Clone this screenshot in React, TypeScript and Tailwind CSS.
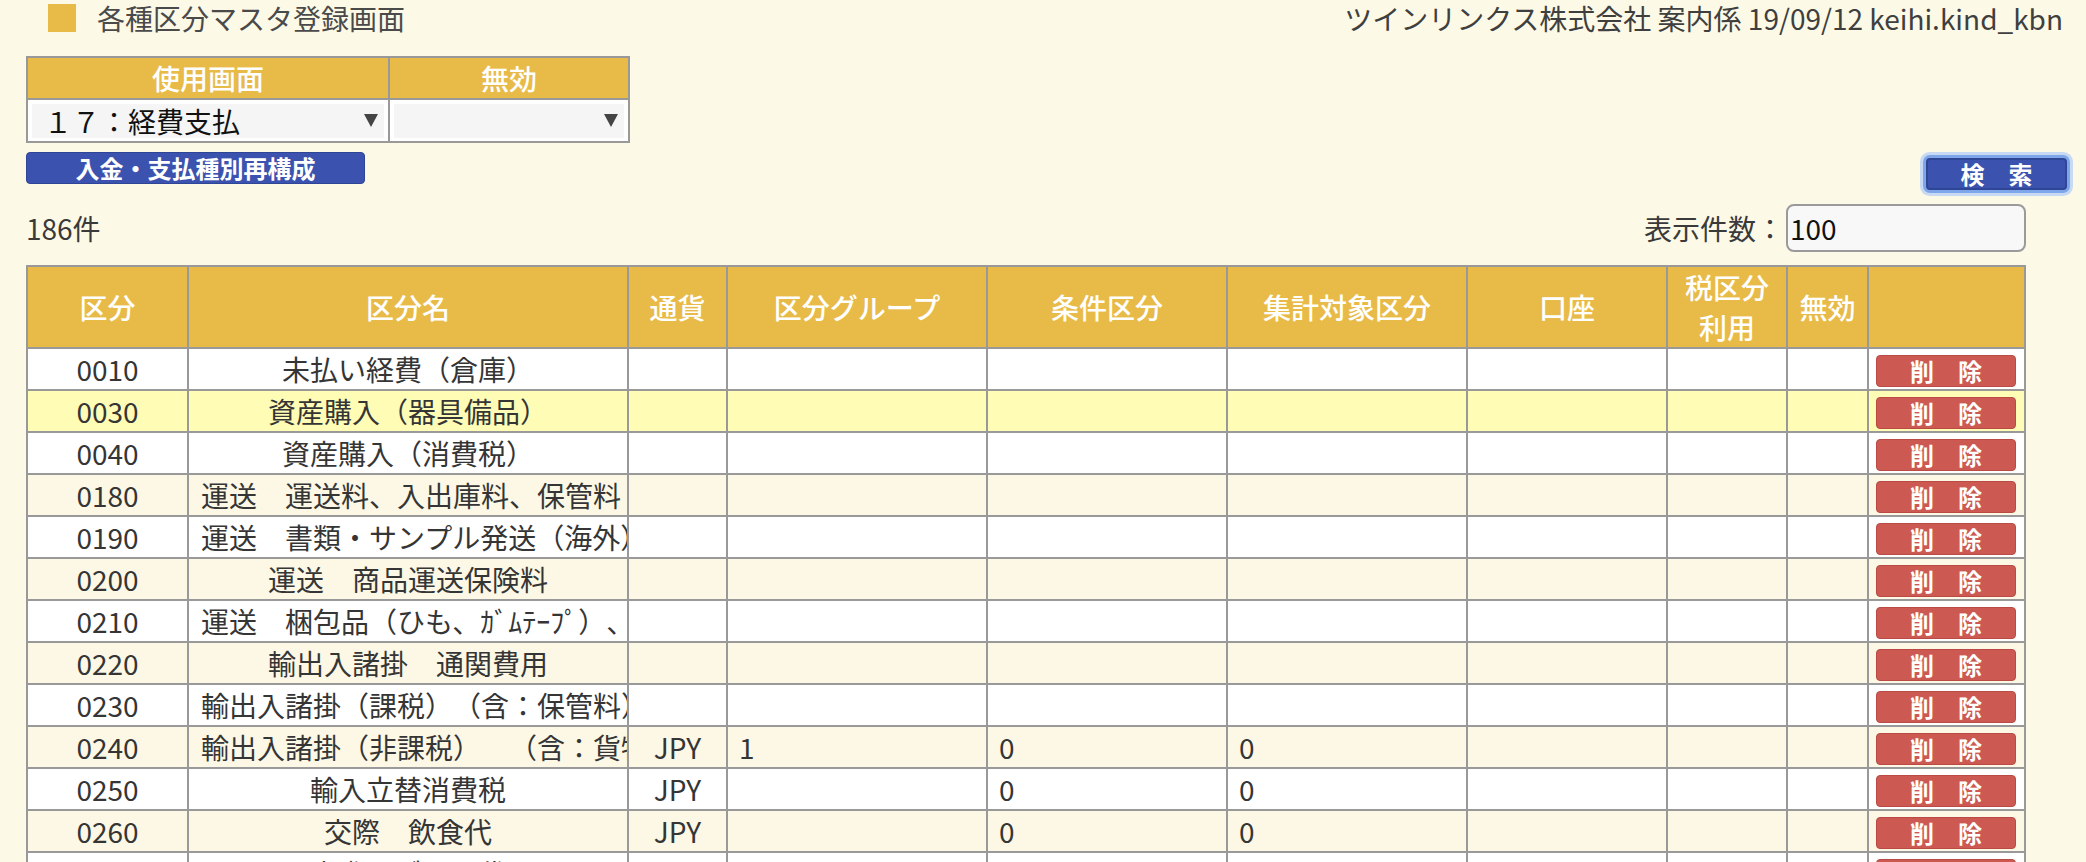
import React from 'react';

type Row = {
  code: string;
  name: string;
  cur?: string;
  group?: string;
  cond?: string;
  agg?: string;
  hl?: boolean;
};

const rows: Row[] = [
  { code: '0010', name: '未払い経費（倉庫）' },
  { code: '0030', name: '資産購入（器具備品）', hl: true },
  { code: '0040', name: '資産購入（消費税）' },
  { code: '0180', name: '運送　運送料、入出庫料、保管料' },
  { code: '0190', name: '運送　書類・サンプル発送（海外）' },
  { code: '0200', name: '運送　商品運送保険料' },
  { code: '0210', name: '運送　梱包品（ひも、ｶﾞﾑﾃｰﾌﾟ）、ダンボール' },
  { code: '0220', name: '輸出入諸掛　通関費用' },
  { code: '0230', name: '輸出入諸掛（課税）（含：保管料）' },
  { code: '0240', name: '輸出入諸掛（非課税）　（含：貨物保険料）', cur: 'JPY', group: '1', cond: '0', agg: '0' },
  { code: '0250', name: '輸入立替消費税', cur: 'JPY', cond: '0', agg: '0' },
  { code: '0260', name: '交際　飲食代', cur: 'JPY', cond: '0', agg: '0' },
  { code: '0270', name: '交際　ゴルフ代', cur: 'JPY', cond: '0', agg: '0' },
];

const cell = 'border-2 border-[#999] p-0';

const Arrow = () => (
  <svg width="14" height="13" viewBox="0 0 14 13" className="shrink-0">
    <polygon points="0,0 14,0 7,13" fill="#444" />
  </svg>
);

const App: React.FC = () => {
  return (
    <div className="min-h-screen bg-[#fdf9e7] font-['Noto_Sans_CJK_JP','Noto_Sans',sans-serif] text-[28px] leading-[40px] text-[#3a3a3a] [text-spacing-trim:space-all]">
      {/* page title */}
      <div className="flex h-[36px] items-center justify-between pl-[48px] pr-[23px]">
        <div className="flex items-center">
          <span className="h-[28px] w-[28px] bg-[#e8bb48]" />
          <span className="ml-[21px] text-[#4a4a4a]">各種区分マスタ登録画面</span>
        </div>
        <div className="text-[#3f3f3f]">ツインリンクス株式会社 案内係 19/09/12 keihi.kind_kbn</div>
      </div>

      <div className="pl-[26px] pr-[19px]">
        {/* filter */}
        <table className="mt-[20px] w-[604px] table-fixed border-collapse">
          <colgroup>
            <col className="w-[362px]" />
            <col className="w-[240px]" />
          </colgroup>
          <thead>
            <tr className="h-[41px] bg-[#e8bb48] text-white">
              <th className={`${cell} font-medium`}>使用画面</th>
              <th className={`${cell} font-medium`}>無効</th>
            </tr>
          </thead>
          <tbody>
            <tr className="h-[43px]">
              <td className={`${cell} bg-white px-[4px]`}>
                <div className="flex h-[34px] items-center justify-between bg-[#f5f5f5] pl-[12px] pr-[6px] text-[#111]">
                  <span>１７：経費支払</span>
                  <Arrow />
                </div>
              </td>
              <td className={`${cell} bg-white px-[4px]`}>
                <div className="flex h-[34px] items-center justify-end bg-[#f5f5f5] pr-[6px]">
                  <Arrow />
                </div>
              </td>
            </tr>
          </tbody>
        </table>

        {/* buttons */}
        <div className="mt-[9px] flex items-start justify-between">
          <button className="h-[32px] w-[339px] rounded-[4px] border border-[#2f4595] bg-[#3b53ae] text-[24px] leading-[30px] font-bold text-white">
            入金・支払種別再構成
          </button>
          <button className="mt-[6px] h-[32px] w-[141px] rounded-[4px] border-2 border-[#2f4595] bg-[#3b53ae] text-[24px] leading-[28px] font-bold text-white shadow-[0_0_0_3px_#7ea6e8,0_0_0_6px_#c8d9f3]">
            検　索
          </button>
        </div>

        {/* count */}
        <div className="mt-[14px] flex h-[48px] w-[2000px] items-center justify-between">
          <span>186件</span>
          <div className="flex items-center">
            <span>表示件数：</span>
            <input
              readOnly
              value="100"
              className="ml-[2px] h-[48px] w-[240px] rounded-[8px] border-2 border-[#9a9a9a] bg-[#f8f8f8] pl-[2px] text-[#111] outline-none"
            />
          </div>
        </div>

        {/* list */}
        <table className="mt-[13px] w-[2000px] table-fixed border-collapse">
          <colgroup>
            <col className="w-[161px]" />
            <col className="w-[440px]" />
            <col className="w-[99px]" />
            <col className="w-[260px]" />
            <col className="w-[240px]" />
            <col className="w-[240px]" />
            <col className="w-[200px]" />
            <col className="w-[120px]" />
            <col className="w-[81px]" />
            <col className="w-[157px]" />
          </colgroup>
          <thead>
            <tr className="h-[82px] bg-[#e8bb48] text-white">
              <th className={`${cell} font-medium`}>区分</th>
              <th className={`${cell} font-medium`}>区分名</th>
              <th className={`${cell} font-medium`}>通貨</th>
              <th className={`${cell} font-medium`}>区分グループ</th>
              <th className={`${cell} font-medium`}>条件区分</th>
              <th className={`${cell} font-medium`}>集計対象区分</th>
              <th className={`${cell} font-medium`}>口座</th>
              <th className={`${cell} px-[10px] font-medium`}>税区分利用</th>
              <th className={`${cell} font-medium`}>無効</th>
              <th className={cell}></th>
            </tr>
          </thead>
          <tbody className="text-[#353535]">
            {rows.map((r, i) => (
              <tr
                key={r.code}
                className={`h-[42px] ${r.hl ? 'bg-[#fffcb6]' : i % 2 === 0 ? 'bg-white' : 'bg-[#fcf8e5]'}`}
              >
                <td className={`${cell} text-center`}>{r.code}</td>
                <td className={cell}>
                  <div className="overflow-hidden whitespace-nowrap px-[12px] text-center">{r.name}</div>
                </td>
                <td className={`${cell} text-center`}>{r.cur}</td>
                <td className={`${cell} pl-[11px]`}>{r.group}</td>
                <td className={`${cell} pl-[11px]`}>{r.cond}</td>
                <td className={`${cell} pl-[11px]`}>{r.agg}</td>
                <td className={cell}></td>
                <td className={cell}></td>
                <td className={cell}></td>
                <td className={`${cell} pl-[7px] pt-[4px]`}>
                  <button className="block h-[32px] w-[140px] rounded-[4px] border border-[#b94a44] bg-[#cc5a53] text-[24px] leading-[30px] font-bold text-white">
                    削　除
                  </button>
                </td>
              </tr>
            ))}
          </tbody>
        </table>
      </div>
    </div>
  );
};

export default App;
